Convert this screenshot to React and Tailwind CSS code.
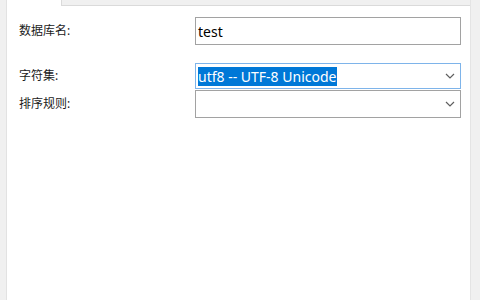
const Chevron = () => (
  <svg width="10" height="6" viewBox="0 0 10 6" className="shrink-0">
    <path d="M1 1l4 4 4-4" fill="none" stroke="#5f5f5f" strokeWidth="1.2" />
  </svg>
);

const Row = ({ label, children, className = "" }) => (
  <div className={`flex items-center ${className}`}>
    <div className="w-[188px] pl-[12px] text-[12px] text-[#1b1b1b]">{label}</div>
    {children}
  </div>
);

const App = () => {
  return (
    <div
      className="w-[480px] h-[300px] bg-[#f0f0f0] flex overflow-hidden"
      style={{ fontFamily: '"Noto Sans", "Noto Sans CJK SC", sans-serif' }}
    >
      <div className="w-[7px] border-r border-[#e2e2e2]" />
      <div className="w-[464px] bg-white flex flex-col border-r border-[#e4e4e4]">
        <div className="flex h-[6px]">
          <div className="w-[54px]" />
          <div className="flex-1 bg-[#f0f0f0] border-l border-b border-[#dadada]" />
        </div>
        <Row label="数据库名:" className="mt-[11px]">
          <div className="w-[266px] h-[28px] border border-[#a2a2a2] flex items-center pl-[2px] text-[14px] text-black">
            test
          </div>
        </Row>
        <Row label="字符集:" className="mt-[18px]">
          <div className="w-[266px] h-[26px] border border-[#7eb4ea] flex items-center pl-[2px] pr-[5px] justify-between">
            <span className="bg-[#0078d7] text-white text-[14px] leading-[19px] pr-[1px]">
              utf8 -- UTF-8 Unicode
            </span>
            <Chevron />
          </div>
        </Row>
        <Row label="排序规则:" className="mt-[1px]">
          <div className="w-[266px] h-[28px] border border-[#a2a2a2] flex items-center justify-end pr-[5px]">
            <Chevron />
          </div>
        </Row>
      </div>
    </div>
  );
};

export default App;
